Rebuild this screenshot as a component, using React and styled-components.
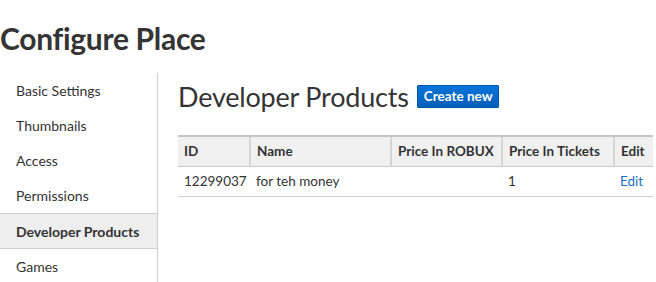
import React from "react";
import styled, { createGlobalStyle } from "styled-components";

const GlobalStyle = createGlobalStyle`
  html, body {
    margin: 0;
    padding: 0;
    background: #fff;
  }
  body {
    font-family: "Lato", "Open Sans", sans-serif;
    color: #333;
    -webkit-font-smoothing: antialiased;
  }
`;

const Page = styled.div`
  width: 656px;
  height: 282px;
  overflow: hidden;
`;

const Title = styled.h1`
  margin: 0;
  height: 73px;
  box-sizing: border-box;
  padding-top: 20px;
  font-size: 30px;
  line-height: 36px;
  font-weight: 700;
  color: #343434;
  letter-spacing: -0.3px;
`;

const Body = styled.div`
  display: flex;
  align-items: flex-start;
`;

const Sidebar = styled.ul`
  flex-shrink: 0;
  list-style: none;
  margin: 0;
  padding: 0;
  width: 157px;
  height: 220px;
  border-right: 1px solid #cfcfcf;
`;

const NavItem = styled.li`
  display: flex;
  align-items: center;
  box-sizing: border-box;
  height: ${(p) => (p.$active ? "36px" : "35px")};
  padding-left: 16px;
  font-size: 14px;
  font-weight: ${(p) => (p.$active ? 700 : 400)};
  color: #333;
  white-space: nowrap;
  background: ${(p) => (p.$active ? "#eeeeee" : "transparent")};
  border-top: ${(p) => (p.$active ? "1px solid #cfcfcf" : "none")};
  border-bottom: ${(p) => (p.$active ? "1px solid #cfcfcf" : "none")};
`;

const Content = styled.div`
  flex: 1;
  padding-left: 20px;
`;

const HeadingRow = styled.div`
  display: flex;
  align-items: center;
  gap: 8px;
  height: 46px;
`;

const Heading = styled.h2`
  margin: 0;
  font-size: 27px;
  font-weight: 400;
  color: #343434;
  letter-spacing: -0.2px;
`;

const CreateButton = styled.button`
  height: 23px;
  padding: 0 6px;
  border: 1px solid #0357a8;
  border-radius: 1px;
  background: linear-gradient(#0a74d8, #005fb8);
  color: #fff;
  font-family: inherit;
  font-size: 13.5px;
  font-weight: 700;
  cursor: pointer;
`;

const Table = styled.table`
  margin-top: 16px;
  width: 475px;
  border-collapse: collapse;
  table-layout: fixed;
  font-size: 13.5px;
`;

const Th = styled.th`
  box-sizing: border-box;
  width: ${(p) => p.$w}px;
  height: 30px;
  padding: 0 6px;
  text-align: left;
  font-weight: 700;
  background: #f0f0f0;
  border-top: 2px solid #c4c4c4;
  border-bottom: 1px solid #c8c8c8;
  border-left: ${(p) => (p.$first ? "none" : "2px solid #d4d4d4")};
  white-space: nowrap;
  overflow: hidden;
`;

const Td = styled.td`
  height: 29px;
  padding: 0 6px;
  border-bottom: 1px solid #d0d0d0;
  white-space: nowrap;
`;

const EditLink = styled.a`
  color: #1a6fc4;
  text-decoration: none;
`;

const navItems = [
  "Basic Settings",
  "Thumbnails",
  "Access",
  "Permissions",
  "Developer Products",
  "Games",
];

const columns = [
  { label: "ID", w: 72 },
  { label: "Name", w: 141 },
  { label: "Price In ROBUX", w: 111 },
  { label: "Price In Tickets", w: 112 },
  { label: "Edit", w: 39 },
];

export default function App() {
  return (
    <Page>
      <GlobalStyle />
      <Title>Configure Place</Title>
      <Body>
        <Sidebar>
          {navItems.map((item) => (
            <NavItem key={item} $active={item === "Developer Products"}>
              {item}
            </NavItem>
          ))}
        </Sidebar>
        <Content>
          <HeadingRow>
            <Heading>Developer Products</Heading>
            <CreateButton>Create new</CreateButton>
          </HeadingRow>
          <Table>
            <thead>
              <tr>
                {columns.map((c, i) => (
                  <Th key={c.label} $w={c.w} $first={i === 0}>
                    {c.label}
                  </Th>
                ))}
              </tr>
            </thead>
            <tbody>
              <tr>
                <Td>12299037</Td>
                <Td>for teh money</Td>
                <Td></Td>
                <Td>1</Td>
                <Td>
                  <EditLink href="#">Edit</EditLink>
                </Td>
              </tr>
            </tbody>
          </Table>
        </Content>
      </Body>
    </Page>
  );
}
